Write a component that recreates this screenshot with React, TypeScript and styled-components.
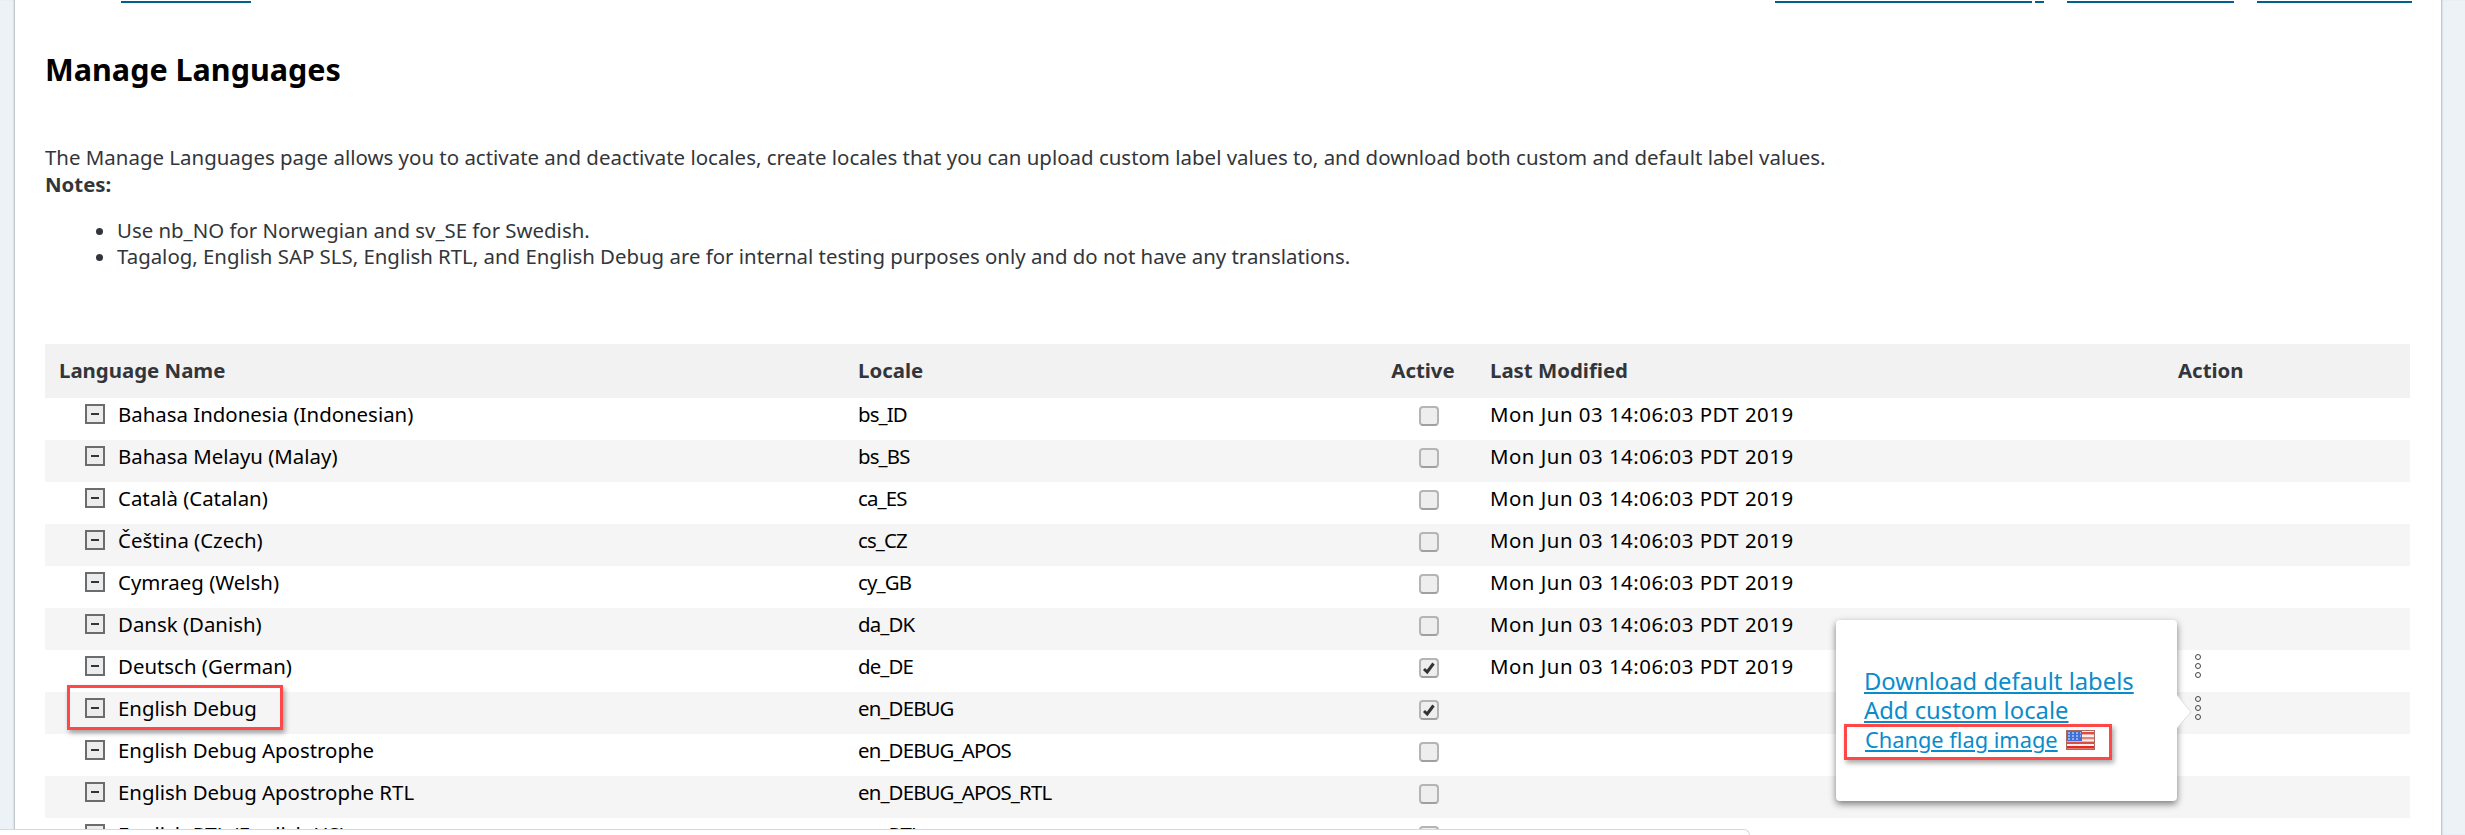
import React from 'react';
import styled, { createGlobalStyle } from 'styled-components';

const rows = [
  { name: 'Bahasa Indonesia (Indonesian)', locale: 'bs_ID', active: false, modified: true },
  { name: 'Bahasa Melayu (Malay)', locale: 'bs_BS', active: false, modified: true },
  { name: 'Català (Catalan)', locale: 'ca_ES', active: false, modified: true },
  { name: 'Čeština (Czech)', locale: 'cs_CZ', active: false, modified: true },
  { name: 'Cymraeg (Welsh)', locale: 'cy_GB', active: false, modified: true },
  { name: 'Dansk (Danish)', locale: 'da_DK', active: false, modified: true },
  { name: 'Deutsch (German)', locale: 'de_DE', active: true, modified: true, kebab: true },
  { name: 'English Debug', locale: 'en_DEBUG', active: true, modified: false, kebab: true },
  { name: 'English Debug Apostrophe', locale: 'en_DEBUG_APOS', active: false, modified: false },
  { name: 'English Debug Apostrophe RTL', locale: 'en_DEBUG_APOS_RTL', active: false, modified: false },
  { name: 'English RTL (English US)', locale: 'en_RTL', active: false, modified: false },
];

const App = (): JSX.Element => {
  return (
    <Page>
      <GlobalStyle />
      <Gutter />
      <Main>
        <TopLinks>
          <TopLink $width={130} $after={1524} />
          <TopLink $width={257} $after={3} />
          <TopLink $width={9} $after={23} />
          <TopLink $width={167} $after={23} />
          <TopLink $width={155} $after={0} />
        </TopLinks>
        <Title>Manage Languages</Title>
        <Intro>
          The Manage Languages page allows you to activate and deactivate locales, create locales that you can upload custom label values to, and download both custom and default label values.
        </Intro>
        <NotesLabel>Notes:</NotesLabel>
        <Notes>
          <li>Use nb_NO for Norwegian and sv_SE for Swedish.</li>
          <li>Tagalog, English SAP SLS, English RTL, and English Debug are for internal testing purposes only and do not have any translations.</li>
        </Notes>
        <Table>
          <colgroup>
            <col style={{ width: 799 }} />
            <col style={{ width: 520 }} />
            <col style={{ width: 112 }} />
            <col style={{ width: 688 }} />
            <col />
          </colgroup>
          <thead>
            <tr>
              <HeadCell>Language Name</HeadCell>
              <HeadCell>Locale</HeadCell>
              <ActiveHead>Active</ActiveHead>
              <HeadCell>Last Modified</HeadCell>
              <HeadCell>Action</HeadCell>
            </tr>
          </thead>
          <tbody>
            {rows.map((row) => (
              <Row key={row.locale}>
                <Cell>
                  <NameWrap>
                    <Toggle />
                    {row.name}
                  </NameWrap>
                </Cell>
                <LocaleCell>{row.locale}</LocaleCell>
                <Cell>
                  <CheckBox>
                    {row.active && (
                      <svg width="14" height="14" viewBox="0 0 14 14">
                        <path d="M2 8 L5.2 11 L11.5 2.5" fill="none" stroke="#333" strokeWidth="3" />
                      </svg>
                    )}
                  </CheckBox>
                </Cell>
                <DateCell>{row.modified && 'Mon Jun 03 14:06:03 PDT 2019'}</DateCell>
                <Cell>
                  {row.kebab && (
                    <Kebab>
                      <i />
                      <i />
                      <i />
                    </Kebab>
                  )}
                </Cell>
              </Row>
            ))}
          </tbody>
        </Table>
        <Highlight $left={52} $top={685} $width={216} $height={45} />
        <Popup>
          <PopupLink>Download default labels</PopupLink>
          <PopupLink>Add custom locale</PopupLink>
          <FlagLink>
            <PopupLink>Change flag image</PopupLink>
            <Flag viewBox="0 0 29 20" preserveAspectRatio="none">
              <rect width="29" height="20" fill="#f4f0f0" />
              <rect y="2" width="29" height="2.4" fill="#e04a3f" />
              <rect y="7" width="29" height="2.4" fill="#e8837a" />
              <rect y="11.6" width="29" height="2.4" fill="#e04a3f" />
              <rect y="16" width="29" height="2.6" fill="#e02a20" />
              <rect width="16" height="11" fill="#3f6fd8" />
              <path d="M2 3h2M6 3h2M10 3h2M14 3h1M2 6h2M6 6h2M10 6h2M14 6h1M2 9h2M6 9h2M10 9h2" stroke="#e8eefc" strokeWidth="1.2" />
              <rect x="0.5" y="0.5" width="28" height="19" fill="none" stroke="#a86a60" />
            </Flag>
          </FlagLink>
          <Highlight $left={8} $top={104} $width={268} $height={36} />
          <Arrow width="15" height="34" viewBox="0 0 15 34">
            <path d="M0 0 L14 17 L0 33" fill="#fff" stroke="#dcdcdc" />
          </Arrow>
        </Popup>
      </Main>
      <RightGutter />
      <BottomSheet />
    </Page>
  );
};

export default App;

const GlobalStyle = createGlobalStyle`
  html, body {
    margin: 0;
    padding: 0;
    background: #ffffff;
  }
`;

const Page = styled.div`
  position: relative;
  display: flex;
  width: 2465px;
  height: 835px;
  overflow: hidden;
  font-family: "Noto Sans", "Liberation Sans", sans-serif;
  color: #32363a;
  background: #fff;
`;

const Gutter = styled.div`
  flex: 0 0 15px;
  background: #edf2f7;
  box-shadow: inset -2px 0 2px -1px #b4b9be;
`;

const RightGutter = styled.div`
  flex: 0 0 24px;
  background: #edf2f7;
  box-shadow: inset 2px 0 2px -1px #b4b9be;
`;

const Main = styled.main`
  position: relative;
  flex: 1;
  min-width: 0;
  padding: 0 16px 0 30px;
`;

const TopLinks = styled.div`
  display: flex;
  height: 2px;
  padding: 1px 0 0 76px;
`;

const TopLink = styled.span<{ $width: number; $after: number }>`
  flex: none;
  width: ${(props) => props.$width}px;
  margin-right: ${(props) => props.$after}px;
  background: #00618c;
`;

const Title = styled.h1`
  margin: 46px 0 0;
  font-size: 30.5px;
  line-height: 40px;
  font-weight: 700;
  color: #000;
`;

const Intro = styled.p`
  margin: 55px 0 0;
  font-size: 20.45px;
  line-height: 27px;
`;

const NotesLabel = styled.div`
  font-size: 20.4px;
  line-height: 26px;
  font-weight: 700;
`;

const Notes = styled.ul`
  margin: 20px 0 0;
  padding-left: 72px;
  font-size: 20.4px;
  line-height: 26px;
`;

const Table = styled.table`
  width: 2365px;
  margin-top: 75px;
  table-layout: fixed;
  border-collapse: collapse;
  font-size: 20.4px;
  color: #000;
`;

const HeadCell = styled.th`
  height: 52px;
  padding: 0 0 2px 14px;
  background: #f2f2f2;
  text-align: left;
  font-weight: 700;
  color: #32363a;
`;

const ActiveHead = styled(HeadCell)`
  padding: 0 0 2px 6px;
  text-align: center;
`;

const Row = styled.tr`
  height: 42px;
  &:nth-child(even) {
    background: #f5f5f5;
  }
`;

const Cell = styled.td`
  padding: 0 0 10px 14px;
  vertical-align: middle;
  white-space: nowrap;
`;

const LocaleCell = styled(Cell)`
  letter-spacing: -0.85px;
`;

const DateCell = styled(Cell)`
  letter-spacing: 0.5px;
`;

const NameWrap = styled.div`
  display: flex;
  align-items: center;
  gap: 13px;
  padding-left: 26px;
`;

const Toggle = styled.span`
  position: relative;
  display: block;
  flex: none;
  box-sizing: border-box;
  width: 20px;
  height: 20px;
  border: 2px solid #6a6d70;
  background: #ececec;
  &::after {
    content: "";
    position: absolute;
    left: 4px;
    right: 4px;
    top: 7px;
    height: 2px;
    background: #333;
  }
`;

const CheckBox = styled.span`
  display: flex;
  align-items: center;
  justify-content: center;
  box-sizing: border-box;
  width: 20px;
  height: 20px;
  margin: 4px 0 0 41px;
  border: 2px solid #b5b5b5;
  border-bottom-color: #a0a0a0;
  border-radius: 4px;
  background: #eeeeee;
`;

const Kebab = styled.div`
  display: flex;
  flex-direction: column;
  gap: 3px;
  width: 6px;
  margin-left: 17px;
  i {
    display: block;
    box-sizing: border-box;
    width: 6px;
    height: 6px;
    border: 1px solid #444;
    border-radius: 50%;
  }
`;

const Highlight = styled.div<{ $left: number; $top: number; $width: number; $height: number }>`
  position: absolute;
  left: ${(props) => props.$left}px;
  top: ${(props) => props.$top}px;
  width: ${(props) => props.$width}px;
  height: ${(props) => props.$height}px;
  box-sizing: border-box;
  border: 3px solid #ff4747;
  box-shadow: 2px 3px 5px rgba(0, 0, 0, 0.35);
`;

const Popup = styled.div`
  position: absolute;
  left: 1821px;
  top: 620px;
  width: 341px;
  height: 181px;
  box-sizing: border-box;
  padding: 47px 28px 0;
  background: #fff;
  border-radius: 4px;
  box-shadow: 0 3px 7px rgba(0, 0, 0, 0.5);
  font-size: 23.8px;
  line-height: 29px;
`;

const PopupLink = styled.a`
  display: block;
  color: #0a8ccb;
  text-decoration: underline;
  white-space: nowrap;
`;

const FlagLink = styled.div`
  display: flex;
  align-items: center;
  gap: 8px;
  padding-left: 1px;
  font-size: 21.8px;
`;

const Flag = styled.svg`
  width: 29px;
  height: 20px;
`;

const Arrow = styled.svg`
  position: absolute;
  left: 341px;
  top: 75px;
`;

const BottomSheet = styled.div`
  position: absolute;
  left: 0;
  bottom: 0;
  width: 1750px;
  height: 6px;
  box-sizing: border-box;
  background: #fff;
  border-top: 1px solid #d8d8d8;
  border-right: 1px solid #d8d8d8;
  border-top-right-radius: 6px;
`;
